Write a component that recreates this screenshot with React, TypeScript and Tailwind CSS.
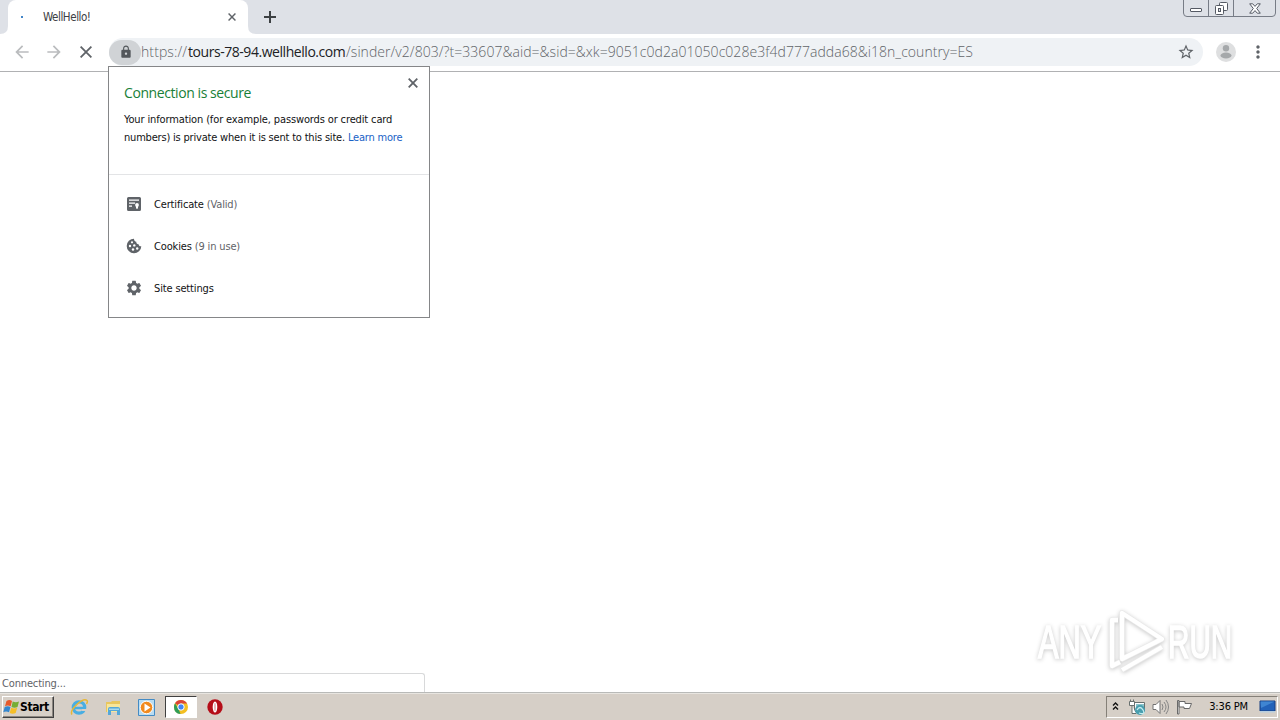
import type { ReactNode } from "react";
import { MdArrowBack, MdArrowForward, MdLock, MdMoreVert, MdSettings, MdStarBorder } from "react-icons/md";

interface InfoRowProps {
  icon: ReactNode;
  label: string;
  detail?: string;
}

function Cross({ className }: { className: string }) {
  return (
    <svg className={className} viewBox="0 0 10 10">
      <path stroke="#5f6368" strokeWidth="1.800" d="m.7.7 8.600 8.600M9.300.7.7 9.300" />
    </svg>
  );
}

function CertificateIcon() {
  return (
    <svg width="16" height="16" viewBox="0 0 16 16">
      <path fill="#5f6368" d="M2.500 1h11A1.500 1.500 0 0 1 15 2.500v11a1.500 1.500 0 0 1-1.500 1.500h-11A1.500 1.500 0 0 1 1 13.500v-11A1.500 1.500 0 0 1 2.500 1z" />
      <path stroke="#fff" strokeWidth="1.200" d="M3 4.200h10M3 7.200h6M3 10.200h3" />
      <circle cx="11" cy="9" r="1.900" fill="#fff" />
      <path fill="#fff" d="M10 10h2v3l-1-.8-1 .8z" />
    </svg>
  );
}

function CookieIcon() {
  return (
    <svg width="16" height="16" viewBox="0 0 16 16">
      <path fill="#5f6368" d="M8 .7a7.300 7.300 0 1 0 7.300 7.500c-1.600.2-2.600-.6-2.700-2-1.500.1-2.500-.9-2.300-2.400C8.800 3.600 8 2.300 8 .7z" />
      <g fill="#fff">
        <circle cx="6" cy="4.300" r="1.100" />
        <circle cx="4" cy="8" r="1.200" />
        <circle cx="8.300" cy="7.400" r="1.200" />
        <circle cx="7" cy="11.500" r="1.200" />
        <circle cx="11.200" cy="10.500" r="1.200" />
      </g>
    </svg>
  );
}

function InfoRow({ icon, label, detail }: InfoRowProps) {
  return (
    <div className="flex h-[42px] items-center pl-[17px] text-[11px] tracking-[-0.15px]">
      <span className="mr-[12px] flex w-4 justify-center text-[#5f6368]">{icon}</span>
      <span className="mt-[2px] text-[#111214]">{label}</span>
      {detail && <span className="mt-[2px] ml-[3px] text-[#5f6368]">{detail}</span>}
    </div>
  );
}

function TabStrip() {
  return (
    <div className="relative flex h-[34px] shrink-0 bg-[#dee1e7]">
      <div className="ml-2 flex w-[240px] items-center rounded-t-[8px] bg-white">
        <span className="ml-[13px] size-[2px] bg-[#4285c8]" />
        <span className="mt-[2px] ml-[20px] text-[11.5px] tracking-[-0.45px] text-[#3c4043]">WellHello!</span>
        <Cross className="mr-[12px] ml-auto size-[8px]" />
      </div>
      <svg className="absolute top-[26px] left-0" width="256" height="8" viewBox="0 0 256 8">
        <path fill="#fff" d="M0 8Q8 8 8 0v8zM248 0Q248 8 256 8h-8z" />
      </svg>
      <svg className="mt-[11px] ml-[16px]" width="12" height="12" viewBox="0 0 12 12">
        <path stroke="#3c4043" strokeWidth="2" d="M6 0v12M0 6h12" />
      </svg>
      <div className="absolute top-[-3px] right-[4px] flex h-[20px] w-[93px] rounded-b-[4px] border border-[#777c86]">
        <div className="flex w-[25px] items-end justify-center border-r border-[#777c86] pb-[4px]">
          <span className="h-[4px] w-[12px] rounded-[1px] border border-[#555a64] bg-white" />
        </div>
        <div className="flex w-[25px] items-center justify-center border-r border-[#777c86]">
          <svg width="13" height="13" viewBox="0 0 13 13" className="mt-[3px]">
            <rect x="4.500" y=".5" width="8" height="8" rx="1" fill="#fff" stroke="#555a64" />
            <rect x=".5" y="3.500" width="8" height="9" rx="1" fill="#fff" stroke="#555a64" />
            <rect x="3.500" y="6.500" width="2" height="3" fill="#dee1e7" stroke="#555a64" />
          </svg>
        </div>
        <div className="flex flex-1 items-center justify-center">
          <svg width="12" height="11" viewBox="0 0 12 11" className="mt-[3px]">
            <path fill="#fff" stroke="#555a64" d="M.7.8h3L6 3.400 8.300.8h3L7.700 5.500l3.600 4.700h-3L6 7.600l-2.300 2.600h-3l3.600-4.700z" />
          </svg>
        </div>
      </div>
    </div>
  );
}

function Toolbar() {
  return (
    <div className="flex h-[38px] shrink-0 items-center border-b border-[#b0b1b3] bg-white pb-[1px]">
      <MdArrowBack className="ml-[12px] text-[20px] text-[#babcbe]" />
      <MdArrowForward className="ml-[12px] text-[20px] text-[#babcbe]" />
      <svg className="ml-[16px]" width="12" height="12" viewBox="0 0 12 12">
        <path stroke="#5f6368" strokeWidth="1.800" d="M.6.6l10.800 10.800M11.400.6.6 11.400" />
      </svg>
      <div className="ml-[17px] flex h-[28px] w-[1094px] items-center rounded-full bg-[#eff2f5]">
        <span className="flex h-[25px] w-[32px] items-center justify-center rounded-full bg-[#d0d3d6]">
          <MdLock className="ml-[2px] text-[14px] text-[#53575b]" />
        </span>
        <span className="flex font-['Open_Sans','Noto_Sans',sans-serif] text-[14px] leading-5 font-light whitespace-pre text-[#5f6468]">
          <span className="w-[47px] tracking-[0.1px]">https://</span>
          <span className="w-[158px] font-normal tracking-[-0.45px] text-[#202124]">tours-78-94.wellhello.com</span>
          <span className="w-[627px] tracking-[0.045px]">/sinder/v2/803/?t=33607&amp;aid=&amp;sid=&amp;xk=9051c0d2a01050c028e3f4d777adda68&amp;i18n_country=ES</span>
        </span>
        <MdStarBorder className="mr-[8px] ml-auto text-[18px] text-[#5f6368]" />
      </div>
      <svg className="ml-[13px]" width="20" height="20" viewBox="0 0 20 20">
        <circle cx="10" cy="10" r="10" fill="#dedfe0" />
        <circle cx="10" cy="6.300" r="3.200" fill="#a5a8aa" />
        <ellipse cx="10" cy="13.500" rx="5.500" ry="3" fill="#a5a8aa" />
      </svg>
      <MdMoreVert className="ml-[12px] text-[20px] text-[#5f6368]" />
    </div>
  );
}

function SiteInfo() {
  return (
    <div className="absolute top-[66px] left-[108px] h-[252px] w-[322px] border border-[#858688] bg-white">
      <Cross className="absolute top-[11px] right-[11px] size-[10px]" />
      <div className="h-[108px] border-b border-[#e3e4e6] pt-[16px] pl-[15px]">
        <h1 className="font-['Open_Sans','Noto_Sans',sans-serif] text-[14px] leading-5 font-normal tracking-[-0.42px] text-[#188038]">
          Connection is secure
        </h1>
        <p className="mt-[8px] text-[11px] leading-[18px] whitespace-nowrap text-[#111214]">
          <span className="tracking-[-0.13px]">Your information (for example, passwords or credit card</span>
          <br />
          <span className="tracking-[-0.195px]">numbers) is private when it is sent to this site. </span>
          <span className="tracking-[-0.195px] text-[#1a62c6]">Learn more</span>
        </p>
      </div>
      <div className="pt-[8px]">
        <InfoRow icon={<CertificateIcon />} label="Certificate" detail="(Valid)" />
        <InfoRow icon={<CookieIcon />} label="Cookies" detail="(9 in use)" />
        <InfoRow icon={<MdSettings className="size-[18px] shrink-0" />} label="Site settings" />
      </div>
    </div>
  );
}

function Watermark() {
  return (
    <div className="absolute top-[604px] left-[1038px] flex h-[76px] w-[200px] items-center font-['Liberation_Sans',sans-serif] text-[46px] leading-none text-white drop-shadow-[0_1px_2px_rgba(0,0,0,0.22)]">
      <span className="w-[70px]">
        <span className="inline-block origin-left scale-x-[0.67] [-webkit-text-stroke:1.5px_white]">ANY</span>
      </span>
      <svg className="shrink-0" width="60" height="76" viewBox="0 0 60 76" fill="none" strokeLinejoin="round">
        <path stroke="#e9e9e9" strokeWidth="5.500" d="M14 9v46l40-20zM10 16H4v46l8-4M14 66l40-23" />
        <path stroke="#fff" strokeWidth="4.300" d="M14 9v46l40-20zM10 16H4v46l8-4M14 66l40-23" />
      </svg>
      <span className="w-[65px]">
        <span className="inline-block origin-left scale-x-[0.645] [-webkit-text-stroke:1.5px_white]">RUN</span>
      </span>
    </div>
  );
}

function WindowsLogo() {
  return (
    <svg width="17" height="16" viewBox="0 0 17 16">
      <path fill="#e65a2c" d="M3.500 2q3-2 5.500 0L7.700 7.300q-3-1.500-5.700 0z" />
      <path fill="#75ad35" d="M9.700 2.500q3 1.500 6.300 0L14.500 8q-3 1.500-6 0z" />
      <path fill="#3487cf" d="M1.700 8q3-1.500 5.800 0L6 13.200q-3-1.500-5.700 0z" />
      <path fill="#f5be27" d="M8.200 8.800q3 1.500 6 0L12.700 14q-3 1.500-6 0z" />
    </svg>
  );
}

function Taskbar() {
  return (
    <div className="flex h-[27px] shrink-0 items-center border-t border-[#e8e5e0] bg-[#d6cfc7] text-[11px]">
      <div className="ml-[2px] flex h-[22px] w-[52px] items-center border border-t-white border-r-[#404040] border-b-[#404040] border-l-white shadow-[inset_-1px_-1px_0_#8b8680]">
        <WindowsLogo />
        <span className="text-[12px] font-bold tracking-[-0.4px] text-black">Start</span>
      </div>
      <svg className="ml-[16px]" width="19" height="18" viewBox="0 0 19 18">
        <circle cx="9" cy="9.500" r="5.700" fill="none" stroke="#49aee2" strokeWidth="3.300" />
        <path stroke="#49aee2" strokeWidth="2.500" d="M4 10h12" />
        <path fill="#d6cfc7" d="M12 11h6v2h-6z" />
        <path fill="none" stroke="#e7b735" strokeWidth="1.500" d="M2 16.500C-1 12 13-1 17 2.500q1 1-.5 3.500" />
      </svg>
      <svg className="ml-[16px]" width="17" height="17" viewBox="0 0 17 17">
        <path fill="#e8c65f" d="M1 3h5l1-1h8v11H1z" />
        <path fill="#f7e69b" d="M2 5h13v8H2z" />
        <path fill="#55a7d8" d="M3 10q0-2 2-2h8q2 0 2 2v6h-3v-4H6v4H3z" />
        <path fill="#a7d9ef" d="M4 9.500h10V11H4z" />
      </svg>
      <svg className="ml-[16px]" width="17" height="17" viewBox="0 0 17 17">
        <path fill="#b8dcf2" stroke="#448bc4" d="M.5.5h16v16H.5z" />
        <circle cx="8.500" cy="8.500" r="6.300" fill="#f18a1e" stroke="#fff" />
        <path fill="#fff" d="M6.500 4.500v8l6-4z" />
      </svg>
      <div className="ml-[10px] flex h-[22px] w-[32px] items-center justify-center border border-t-[#404040] border-r-white border-b-white border-l-[#404040] bg-white">
        <svg width="14" height="14" viewBox="0 0 14 14">
          <circle cx="7" cy="7" r="7" fill="#f4bf22" />
          <path fill="#db4437" d="M7 7 1 3.300Q3 0 7 0q4 0 6.100 3.500H7z" />
          <path fill="#2f9d57" d="M1 3.300 5 10l1.500 4Q0 13.500 0 7q0-2 1-3.700z" />
          <circle cx="7" cy="7" r="3.200" fill="#4285f4" stroke="#fff" />
        </svg>
      </div>
      <svg className="ml-[10px]" width="16" height="16" viewBox="0 0 16 16">
        <circle cx="8" cy="8" r="7.700" fill="#b50d18" />
        <ellipse cx="8" cy="8" rx="2.300" ry="5.600" fill="#fff" />
        <ellipse cx="8" cy="8" rx=".6" ry="4.300" fill="#d9868b" />
      </svg>
      <div className="mr-[2px] ml-auto flex h-[22px] w-[172px] items-center border border-t-[#858078] border-r-white border-b-white border-l-[#858078]">
        <svg className="mb-[2px] ml-[5px]" width="7" height="8" viewBox="0 0 7 8">
          <path fill="none" stroke="#111" strokeWidth="1.400" d="m1 3.500 2.500-2.500L6 3.500M1 7.500 3.500 5 6 7.500" />
        </svg>
        <svg className="ml-[10px]" width="17" height="17" viewBox="0 0 17 17">
          <path fill="#fff" stroke="#68706f" d="M5.500 3.500h10v9h-10z" />
          <path fill="#89c4cc" d="M7 5h8v7H7z" />
          <path fill="#fff" stroke="#68706f" d="M.5 2.500h5v4h-5zM1.500.5v2M4.500.5v2M3 6.500v8h4" />
          <circle cx="11" cy="11" r="5" fill="#499faf" />
          <path stroke="#c8edf0" strokeWidth="1.300" fill="none" d="M8 11q3-5 6 0t-4 3" />
        </svg>
        <svg className="ml-[6px]" width="18" height="16" viewBox="0 0 18 16">
          <path fill="#fff" stroke="#727272" d="M1 5.500h3l4-4v13l-4-4H1z" />
          <path fill="none" stroke="#858585" d="M10 5q2 3 0 6M12 3q4 5 0 10M14 1q5 7 0 14" />
        </svg>
        <svg className="ml-[6px]" width="17" height="16" viewBox="0 0 17 16">
          <path fill="#fff" stroke="#696969" d="M1.500 15V1.500H3V15zM3 2.500h6v2h6.500l-2 5H8v-1.500H3z" />
        </svg>
        <span className="mt-[1px] ml-auto tracking-[-0.15px] text-black">3:36 PM</span>
        <svg className="mr-[1px] ml-[11px]" width="17" height="16" viewBox="0 0 17 16">
          <path fill="#2262b9" stroke="#193e81" d="M1 2h15v10H1z" />
          <path fill="#3f85d2" d="m1.500 2.500 14 0L2 9z" />
          <path fill="#b9cede" d="M1 12h15v1.500H1z" />
        </svg>
      </div>
    </div>
  );
}

export default function App() {
  return (
    <div className="relative flex h-[720px] w-[1280px] flex-col overflow-hidden bg-white font-['DejaVu_Sans_Condensed','Noto_Sans',sans-serif]">
      <TabStrip />
      <Toolbar />
      <main className="flex flex-1 items-end">
        <div className="flex h-[19px] w-[425px] items-center rounded-tr-[3px] border-t border-r border-[#d8d9da] pt-[2px] pl-[2px] text-[11px] tracking-[-0.15px] text-[#5f6368]">
          Connecting...
        </div>
      </main>
      <div className="h-px bg-[#b9bab8]" />
      <Taskbar />
      <SiteInfo />
      <Watermark />
    </div>
  );
}
